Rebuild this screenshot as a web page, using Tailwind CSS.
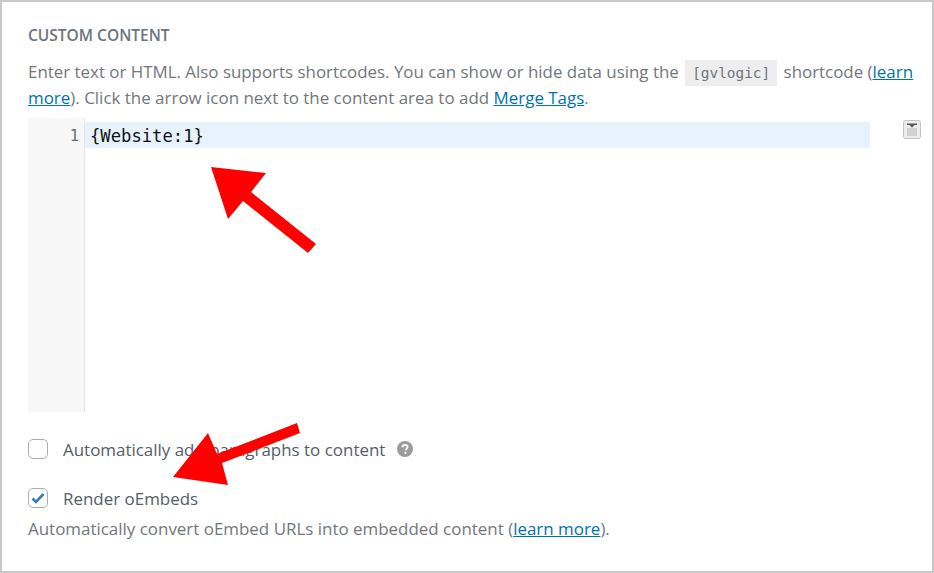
<!DOCTYPE html>
<html lang="en">
<head>
  <meta charset="UTF-8" />
  <title>Custom Content</title>
  <script src="https://cdn.jsdelivr.net/npm/@tailwindcss/browser@4"></script>
</head>
<body class="bg-white">
  <div class="relative w-[934px] h-[573px] overflow-hidden border-2 border-[#c8c8c8] pl-[26px] pr-[11px] pt-[23px] font-['Open_Sans',sans-serif] text-[#72777c] text-[16.95px] leading-[26px]">
    <h3 class="text-[15.5px] leading-[20px] font-semibold text-[#6c757d] uppercase">Custom Content</h3>
    <p class="mt-[14px] w-[890px]"><span class="text-[16.9px]">Enter text or HTML. Also supports shortcodes. You can show or hide data using the</span> <code class="mx-[2px] px-[7px] py-[5px] leading-none bg-[#eeeeee] text-[14.4px] text-[#6f757a] font-['DejaVu_Sans_Mono',monospace]">[gvlogic]</code> <span class="text-[16.9px]">shortcode (</span><a class="text-[#0073aa] underline">learn more</a>). Click the arrow icon next to the content area to add <a class="text-[#0073aa] underline">Merge Tags</a>.</p>

    <div class="mt-[7px] flex">
      <div class="shrink-0 w-[57px] h-[294px] bg-[#f7f7f7] border-r border-[#e5e5e5] pt-[5px] pr-[5px] text-right font-['DejaVu_Sans_Mono',monospace] text-[15.5px] leading-[26px] text-[#6d6d6d]">1</div>
      <div class="shrink-0 pt-[4px]">
        <div class="w-[785px] h-[26px] bg-[#e8f2fe] pl-[5px] font-['DejaVu_Sans_Mono',monospace] text-[17.2px] leading-[28px] text-[#111111]">{Website:1}</div>
      </div>
      <svg class="shrink-0 ml-[33px] mt-[2px]" width="18" height="19" viewBox="0 0 18 19">
        <rect x="0.500" y="0.500" width="17" height="18" rx="2" fill="#ececec" stroke="#c4c4c4" />
        <path d="M4 3.500h10v1.500h-2.500L9 7.500 6.500 5H4z" fill="#555555" />
        <path d="M4 9h10M4 11h10M4 13h10M4 15h10" stroke="#b5b5b5" />
      </svg>
    </div>

    <div class="mt-[24px] flex items-center h-[26px]">
      <span class="w-[20px] h-[20px] rounded-[5px] border border-[#a9adb3] bg-white"></span>
      <span class="ml-[15px] mt-[2px] text-[#555d66]">Automatically add paragraphs to content</span>
      <svg class="ml-[12px]" width="16" height="16" viewBox="0 0 16 16">
        <circle cx="8" cy="8" r="8" fill="#9b9b9b" />
        <path d="M5.400 6.200C5.500 4.700 6.600 4 8 4c1.500 0 2.600.8 2.600 2.100 0 1.800-2 1.700-2 3.200" fill="none" stroke="#fff" stroke-width="1.800" />
        <rect x="7.400" y="10.700" width="2" height="2" fill="#fff" />
      </svg>
    </div>

    <div class="mt-[23px] flex items-center h-[26px]">
      <span class="w-[20px] h-[20px] rounded-[5px] border border-[#a9adb3] bg-white flex items-center justify-center">
        <svg width="14" height="12" viewBox="0 0 14 12"><path d="M1.500 6.500 5 10 12.500 2" fill="none" stroke="#2e7dc0" stroke-width="2.600" /></svg>
      </span>
      <span class="ml-[15px] mt-[2px] text-[#555d66]">Render oEmbeds</span>
    </div>
    <p class="mt-[5px]">Automatically convert oEmbed URLs into embedded content (<a class="text-[#0073aa] underline">learn more</a>).</p>

    <svg class="absolute left-[-2px] top-[-2px]" width="934" height="573" viewBox="0 0 934 573">
      <polygon points="211,167 266,173 251,192 316,244 308,253 243,201 228,219" fill="#ff0000" />
      <polygon points="173,477 208,433 217,454 297,423 300,433 222,463 228,485" fill="#ff0000" />
    </svg>
  </div>
</body>
</html>
